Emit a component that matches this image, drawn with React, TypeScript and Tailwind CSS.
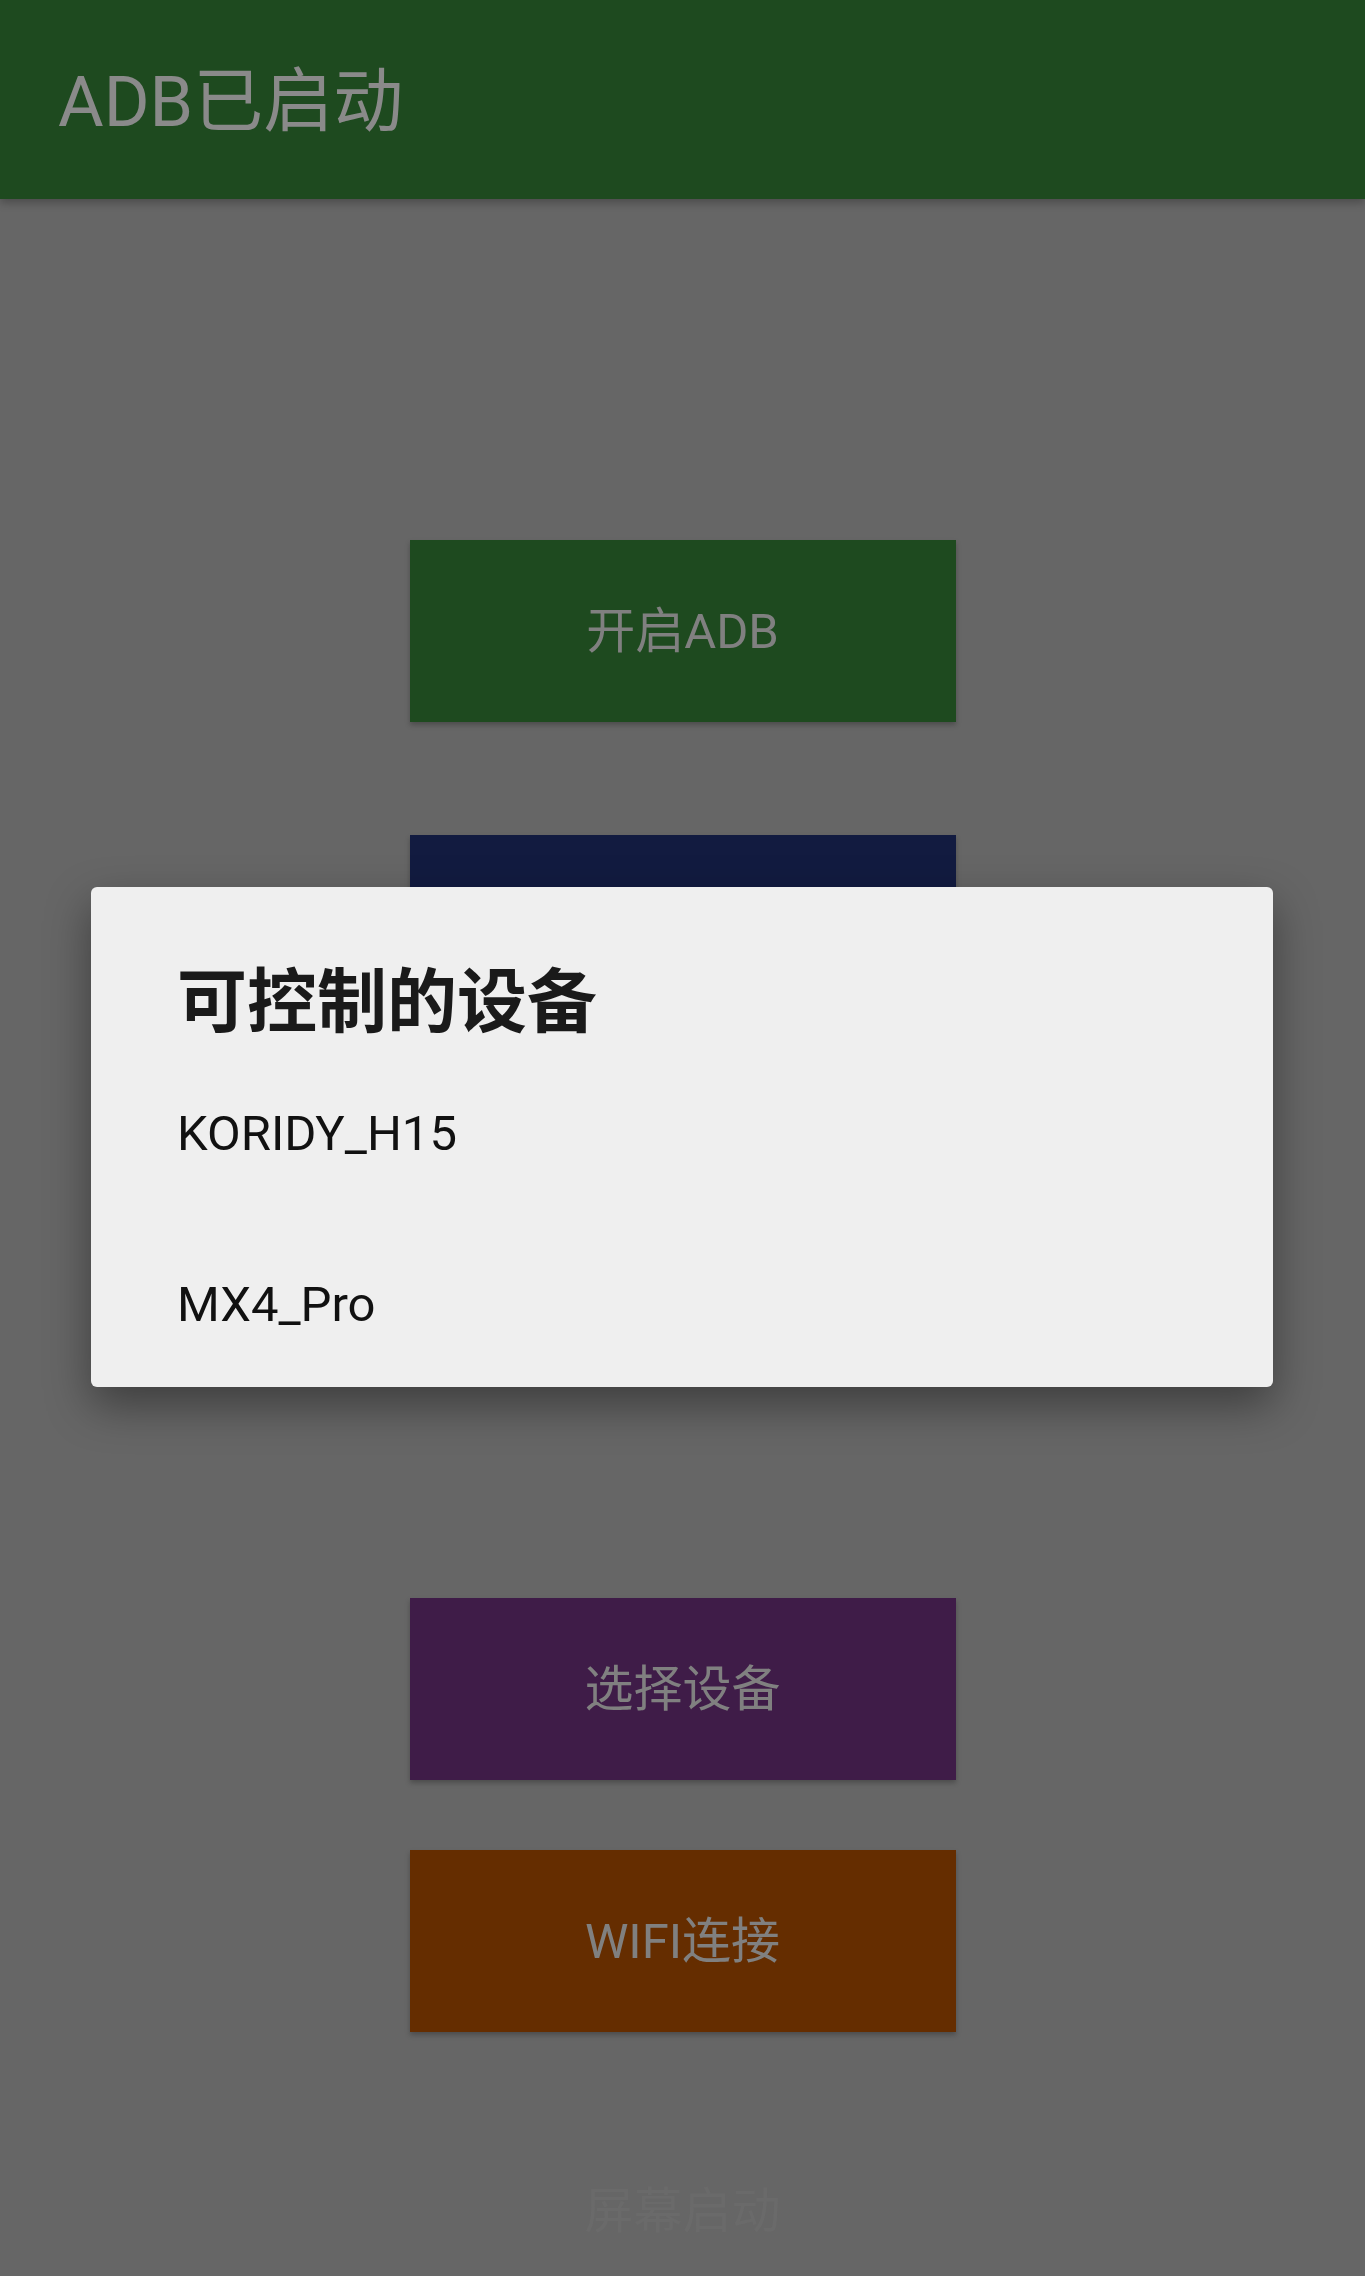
const font = "font-['Roboto','Noto_Sans_CJK_SC',sans-serif]";

const buttons = [
  { label: "开启ADB", bg: "bg-[#1e4a1f]", mt: "mt-[341px]" },
  { label: "", bg: "bg-[#121b40]", mt: "mt-[113px]" },
  { label: "选择设备", bg: "bg-[#3f1c48]", mt: "mt-[581px]" },
  { label: "WIFI连接", bg: "bg-[#652d00]", mt: "mt-[70px]" },
];

export default function App() {
  const devices = ["KORIDY_H15", "MX4_Pro"];

  return (
    <div className={`relative w-full h-[2276px] bg-[#666666] overflow-hidden ${font}`}>
      {/* app bar */}
      <header className="h-[199px] bg-[#1e4a1f] flex items-center pl-[58px] shadow-[0_4px_8px_rgba(0,0,0,0.25)] relative z-10">
        <h1 className="text-[70px] leading-none text-[#8a8a8a] pt-[4px]">ADB已启动</h1>
      </header>

      {/* buttons */}
      <main className="flex flex-col items-center">
        {buttons.map((b, i) => (
          <div
            key={i}
            className={`${b.mt} ${b.bg} w-[546px] h-[182px] flex items-center justify-center shadow-[0_3px_5px_rgba(0,0,0,0.25)]`}
          >
            <span className="text-[49px] leading-none text-[#808080]">{b.label}</span>
          </div>
        ))}
        <div className="mt-[134px] w-[546px] h-[90px] flex items-center justify-center">
          <span className="text-[49px] leading-none text-[#6a6a6a]">屏幕启动</span>
        </div>
      </main>

      {/* dialog */}
      <div className="absolute left-[91px] top-[887px] w-[1182px] h-[500px] bg-[#efefef] rounded-[6px] shadow-[0_18px_45px_rgba(0,0,0,0.4)] pl-[86px] pt-[81px]">
        <h2 className="text-[70px] leading-none font-bold text-[#1a1a1a]">可控制的设备</h2>
        <ul className="mt-[60px]">
          {devices.map((d) => (
            <li key={d} className="h-[171px] flex items-center text-[49px] text-[#111111] leading-none">
              <span className="-translate-y-[50px]">{d}</span>
            </li>
          ))}
        </ul>
      </div>
    </div>
  );
}
